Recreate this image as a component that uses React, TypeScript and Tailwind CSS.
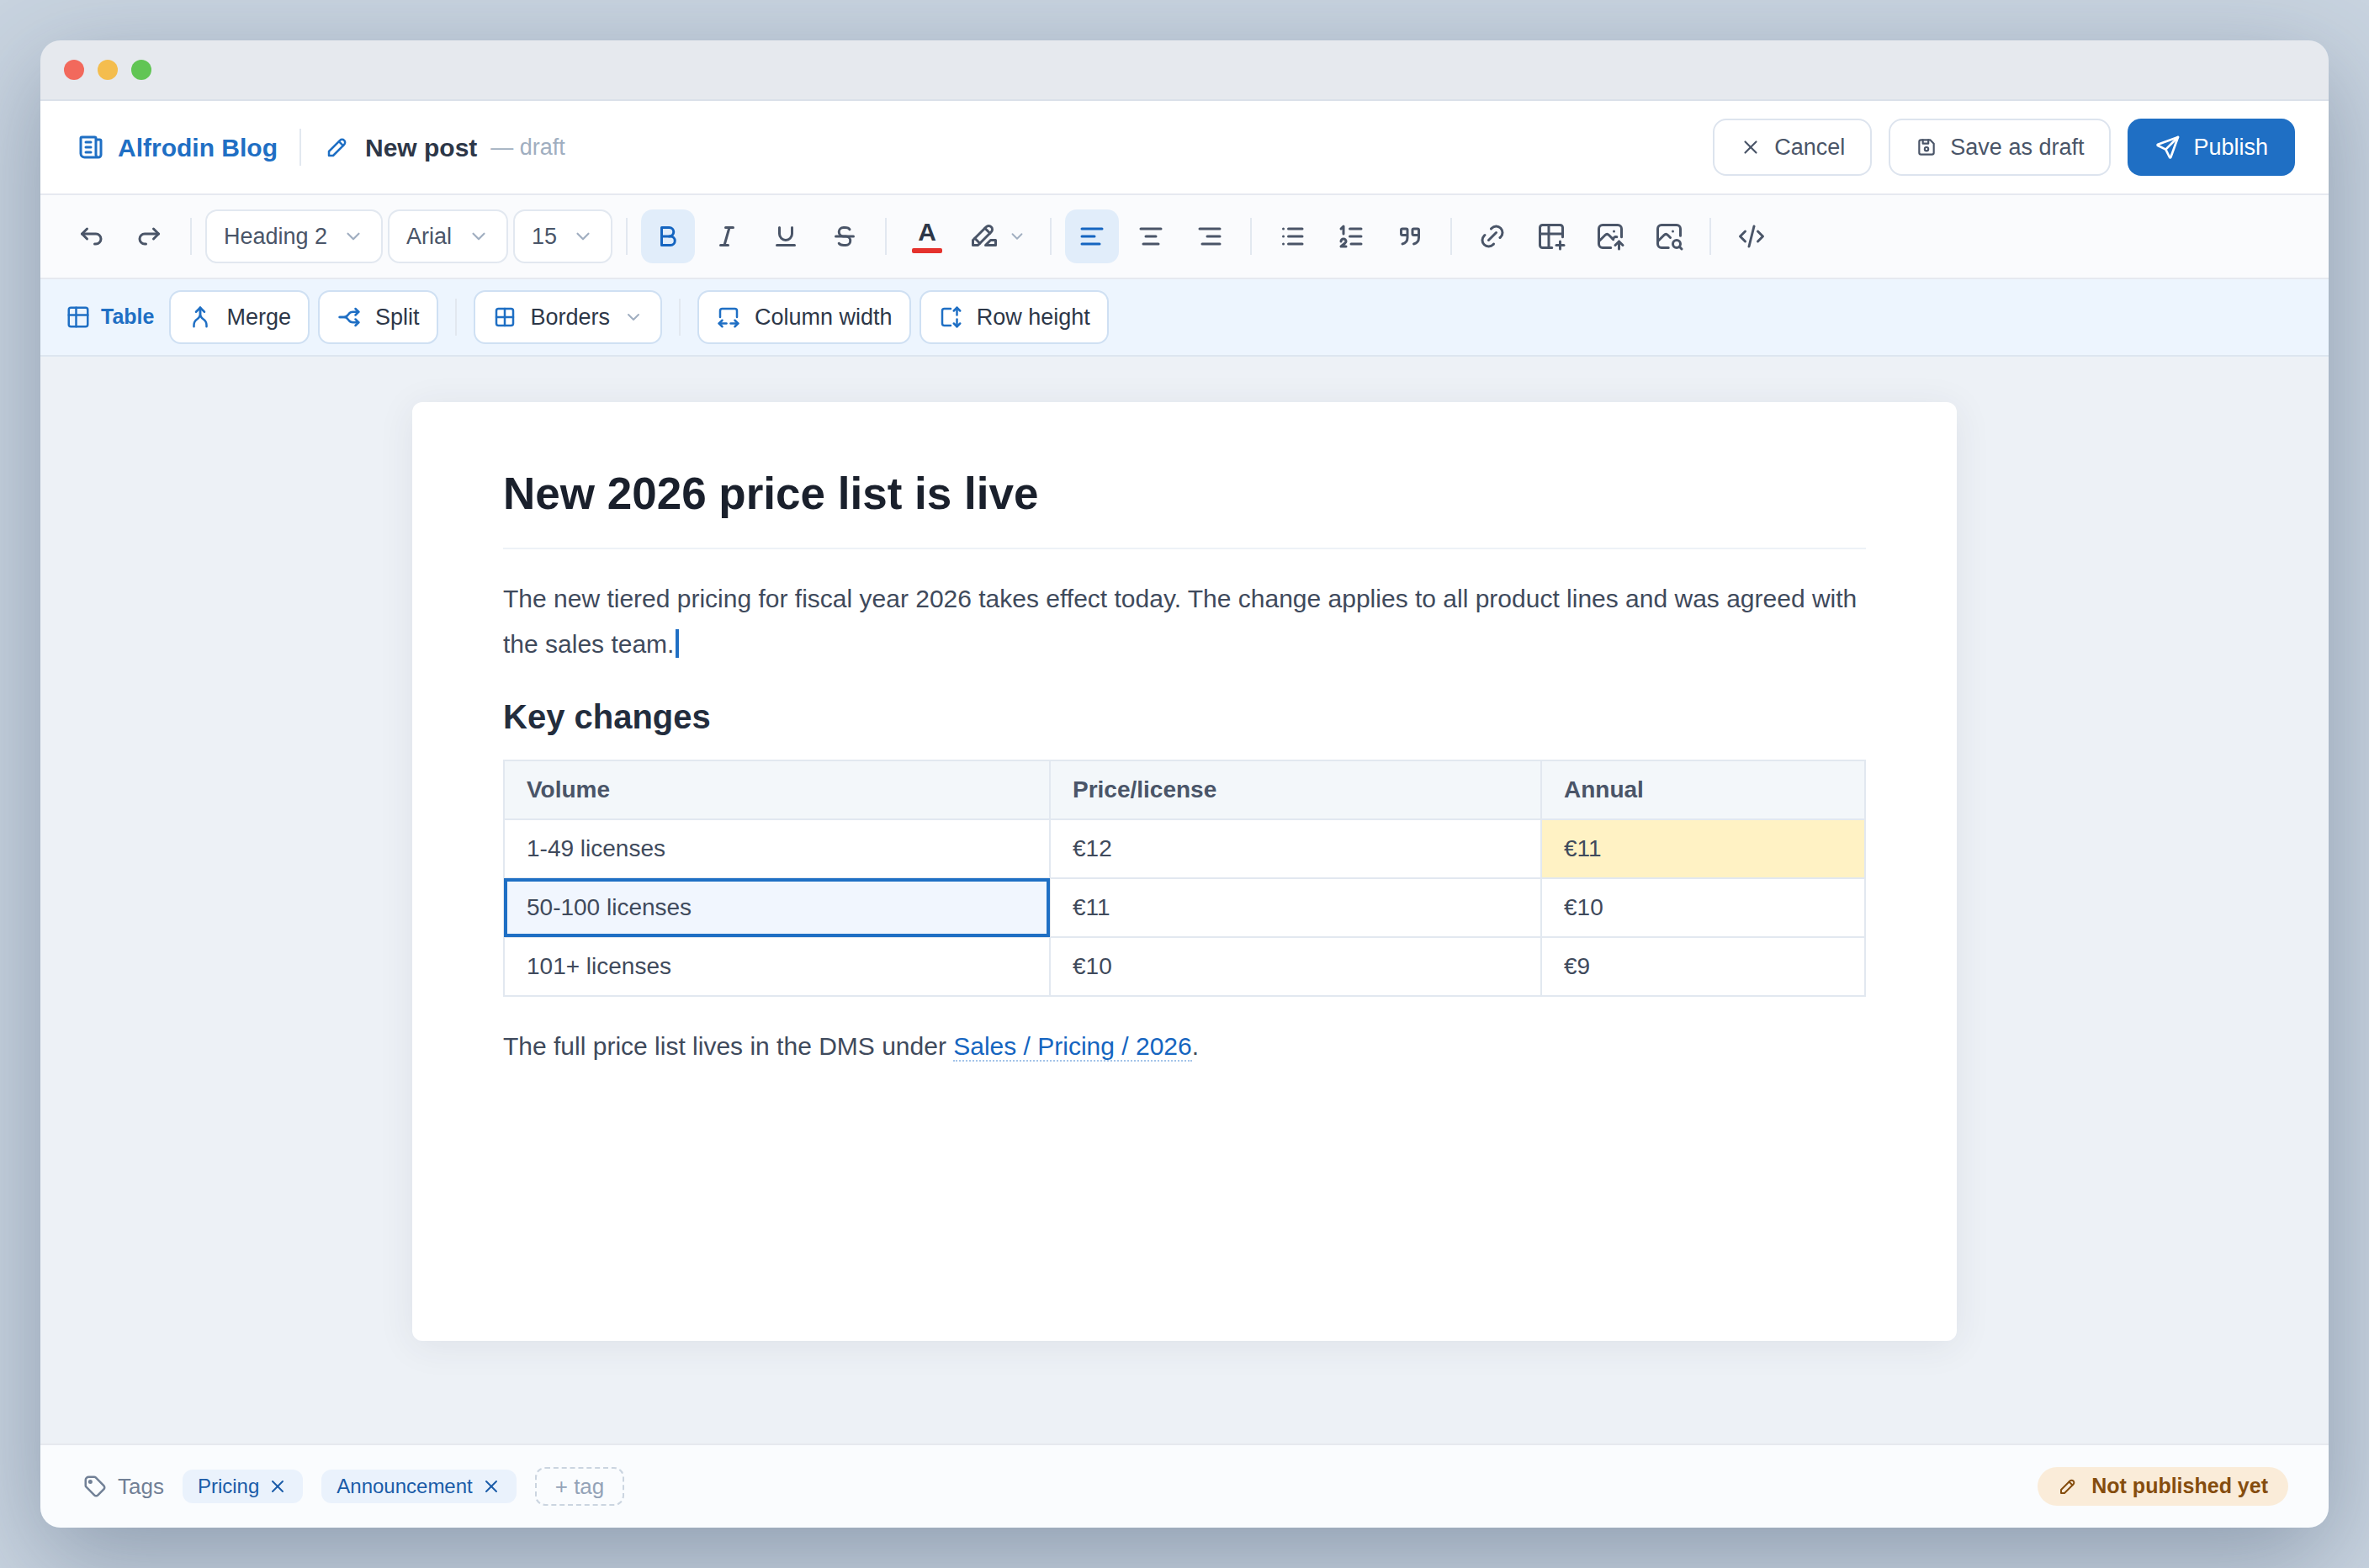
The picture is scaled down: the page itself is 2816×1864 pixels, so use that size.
import type { ReactNode } from "react";
import type { IconType } from "react-icons";
import {
  TbAlignCenter,
  TbAlignLeft,
  TbAlignRight,
  TbArrowAutofitHeight,
  TbArrowAutofitWidth,
  TbArrowBackUp,
  TbArrowForwardUp,
  TbArrowMerge,
  TbArrowsSplit2,
  TbBold,
  TbBorderAll,
  TbChevronDown,
  TbCode,
  TbDeviceFloppy,
  TbHighlight,
  TbItalic,
  TbLink,
  TbList,
  TbListNumbers,
  TbNews,
  TbPencil,
  TbPhotoSearch,
  TbPhotoUp,
  TbQuote,
  TbSend,
  TbStrikethrough,
  TbTable,
  TbTablePlus,
  TbTag,
  TbUnderline,
  TbX,
} from "react-icons/tb";

const rows = [
  { volume: "1-49 licenses", price: "€12", annual: "€11" },
  { volume: "50-100 licenses", price: "€11", annual: "€10" },
  { volume: "101+ licenses", price: "€10", annual: "€9" },
];

const tags = ["Pricing", "Announcement"];

function Divider() {
  return <span className="mx-[10px] h-11 w-0.5 shrink-0 bg-[#e2e8f0]" />;
}

type ToolProps = {
  icon: IconType;
  label: string;
  active?: boolean;
};

function Tool({ icon: Icon, label, active }: ToolProps) {
  return (
    <button
      type="button"
      aria-label={label}
      aria-pressed={active}
      className={`flex size-16 shrink-0 items-center justify-center rounded-[14px] ${
        active ? "bg-[#e1edfa] text-[#1565c0]" : "text-[#4a5568]"
      }`}
    >
      <Icon className="size-9" />
    </button>
  );
}

type PickerProps = {
  label: string;
  options: string[];
  width: string;
};

function Picker({ label, options, width }: PickerProps) {
  return (
    <div className={`relative shrink-0 ${width}`}>
      <select
        aria-label={label}
        className="h-16 w-full appearance-none rounded-[14px] border-2 border-[#e2e8f0] bg-white pr-12 pl-5 text-[27px] text-[#4a5568]"
      >
        {options.map((option) => (
          <option key={option}>{option}</option>
        ))}
      </select>
      <TbChevronDown className="pointer-events-none absolute top-[19px] right-[22px] size-[26px] text-[#a0aec0]" />
    </div>
  );
}

function TableButton({
  icon: Icon,
  children,
  menu,
}: {
  icon: IconType;
  children: ReactNode;
  menu?: boolean;
}) {
  return (
    <button
      type="button"
      className="flex h-16 shrink-0 items-center gap-4 rounded-[14px] border-2 border-[#cfe0f3] bg-white px-5 text-[27px] text-[#2d3748]"
    >
      <Icon className="size-[30px] text-[#1f6fc4]" />
      {children}
      {menu && <TbChevronDown className="size-6 text-[#a0aec0]" />}
    </button>
  );
}

function Header() {
  return (
    <header className="flex h-28 shrink-0 items-center justify-between border-b-2 border-[#e6e9f0] bg-white px-10">
      <div className="flex items-center">
        <div className="flex items-center gap-[14px] pl-0.5 text-[30px] font-bold text-[#1f6fc4]">
          <TbNews className="size-9" />
          Alfrodin Blog
        </div>
        <span className="mr-7 ml-[26px] h-11 w-0.5 bg-[#e2e8f0]" />
        <TbPencil className="mr-[18px] size-[30px] text-[#1f6fc4]" />
        <h2 className="text-[30px] font-bold text-[#2d3748]">New post</h2>
        <span className="ml-4 text-[27px] text-[#a0aec0]">— draft</span>
      </div>

      <div className="flex items-center gap-5 text-[27px]">
        <button
          type="button"
          className="flex h-[68px] items-center gap-[15px] rounded-2xl border-2 border-[#dde4ee] bg-white px-[30px] text-[#4a5568]"
        >
          <TbX className="size-[26px]" />
          Cancel
        </button>
        <button
          type="button"
          className="flex h-[68px] items-center gap-[15px] rounded-2xl border-2 border-[#dde4ee] bg-white px-[30px] text-[#4a5568]"
        >
          <TbDeviceFloppy className="size-[26px]" />
          Save as draft
        </button>
        <button
          type="button"
          className="flex h-[68px] items-center gap-[14px] rounded-2xl bg-[#1f6fc4] px-8 text-white"
        >
          <TbSend className="size-8" />
          Publish
        </button>
      </div>
    </header>
  );
}

function Toolbar() {
  return (
    <div className="flex h-[100px] shrink-0 items-center gap-[6px] border-b-2 border-[#e6e9f0] bg-[#fafbfd] px-7">
      <Tool icon={TbArrowBackUp} label="Undo" />
      <Tool icon={TbArrowForwardUp} label="Redo" />
      <Divider />
      <Picker
        label="Text style"
        options={["Heading 2", "Heading 1", "Text"]}
        width="w-[211px]"
      />
      <Picker label="Font" options={["Arial", "Roboto"]} width="w-[143px]" />
      <Picker label="Font size" options={["15", "12", "18"]} width="w-[118px]" />
      <Divider />
      <Tool icon={TbBold} label="Bold" active />
      <Tool icon={TbItalic} label="Italic" />
      <Tool icon={TbUnderline} label="Underline" />
      <Tool icon={TbStrikethrough} label="Strikethrough" />
      <Divider />
      <button
        type="button"
        aria-label="Text color"
        className="flex size-16 shrink-0 flex-col items-center justify-center gap-1"
      >
        <span className="text-[30px] leading-[30px] font-bold text-[#2d3748]">
          A
        </span>
        <span className="h-[6px] w-9 rounded-xs bg-[#e5322d]" />
      </button>
      <button
        type="button"
        aria-label="Highlight"
        className="flex h-16 shrink-0 items-center gap-[10px] px-3 text-[#4a5568]"
      >
        <TbHighlight className="size-9" />
        <TbChevronDown className="size-[22px] text-[#a0aec0]" />
      </button>
      <Divider />
      <Tool icon={TbAlignLeft} label="Align left" active />
      <Tool icon={TbAlignCenter} label="Align center" />
      <Tool icon={TbAlignRight} label="Align right" />
      <Divider />
      <Tool icon={TbList} label="Bulleted list" />
      <Tool icon={TbListNumbers} label="Numbered list" />
      <Tool icon={TbQuote} label="Quote" />
      <Divider />
      <Tool icon={TbLink} label="Link" />
      <Tool icon={TbTablePlus} label="Insert table" />
      <Tool icon={TbPhotoUp} label="Upload image" />
      <Tool icon={TbPhotoSearch} label="Browse images" />
      <Divider />
      <Tool icon={TbCode} label="Source code" />
    </div>
  );
}

function TableBar() {
  return (
    <div className="flex h-[92px] shrink-0 items-center gap-[10px] border-b-2 border-[#dde6f0] bg-[#edf5fe] px-7">
      <div className="mr-2 flex items-center gap-3 pl-0.5 text-[25px] font-bold text-[#1f6fc4]">
        <TbTable className="size-[30px]" />
        Table
      </div>
      <TableButton icon={TbArrowMerge}>Merge</TableButton>
      <TableButton icon={TbArrowsSplit2}>Split</TableButton>
      <Divider />
      <TableButton icon={TbBorderAll} menu>
        Borders
      </TableButton>
      <Divider />
      <TableButton icon={TbArrowAutofitWidth}>Column width</TableButton>
      <TableButton icon={TbArrowAutofitHeight}>Row height</TableButton>
    </div>
  );
}

function Article() {
  return (
    <article className="mx-auto min-h-[1116px] w-full max-w-[1836px] rounded-xl bg-white px-[108px] pt-[74px] pb-16 shadow-[0_6px_44px_rgba(45,55,72,0.08)]">
      <h1 className="border-b-2 border-[#edf2f7] pb-[29px] text-[53px] leading-[70px] font-bold text-[#1a202c]">
        New 2026 price list is live
      </h1>

      <p className="mt-8 text-[30px] leading-[54px] text-[#3f4a5c]">
        The new tiered pricing for fiscal year 2026 takes effect today. The
        change applies to all product lines and was agreed with the sales team.
        <span className="ml-0.5 inline-block h-[34px] w-1 bg-[#1f6fc4] align-[-6px]" />
      </p>

      <h2 className="mt-[34px] text-[40px] leading-[50px] font-bold text-[#232d3d]">
        Key changes
      </h2>

      <table className="mt-[26px] w-full table-fixed border-collapse text-left text-[28px] leading-[36px] text-[#3f4a5c]">
        <thead>
          <tr className="bg-[#f3f7fa] text-[#4a5568]">
            <th className="w-[649px] border-2 border-[#e2e8f0] px-[26px] py-4 font-bold">
              Volume
            </th>
            <th className="w-[584px] border-2 border-[#e2e8f0] px-[26px] py-4 font-bold">
              Price/license
            </th>
            <th className="border-2 border-[#e2e8f0] px-[26px] py-4 font-bold">
              Annual
            </th>
          </tr>
        </thead>
        <tbody>
          {rows.map((row, i) => (
            <tr key={row.volume}>
              <td
                className={`border-2 border-[#e2e8f0] px-[26px] py-4 ${
                  i === 1
                    ? "bg-[#f1f6fe] outline-4 -outline-offset-4 outline-[#1f6fc4]"
                    : ""
                }`}
              >
                {row.volume}
              </td>
              <td className="border-2 border-[#e2e8f0] px-[26px] py-4">
                {row.price}
              </td>
              <td
                className={`border-2 border-[#e2e8f0] px-[26px] py-4 ${
                  i === 0 ? "bg-[#fff2c4]" : ""
                }`}
              >
                {row.annual}
              </td>
            </tr>
          ))}
        </tbody>
      </table>

      <p className="mt-8 text-[30px] leading-[54px] text-[#3f4a5c]">
        The full price list lives in the DMS under{" "}
        <a
          href="#"
          className="border-b-2 border-dotted border-[#a3c4e9] text-[#1565c0]"
        >
          Sales / Pricing / 2026
        </a>
        .
      </p>
    </article>
  );
}

function Footer() {
  return (
    <footer className="flex h-[100px] shrink-0 items-center justify-between border-t-2 border-[#e6e9ee] bg-[#fafcfe] px-12">
      <div className="flex items-center gap-[22px]">
        <div className="flex items-center gap-3 pl-0.5 text-[26px] text-[#718096]">
          <TbTag className="size-[30px]" />
          Tags
        </div>
        {tags.map((tag) => (
          <span
            key={tag}
            className="flex h-10 items-center gap-[10px] rounded-xl bg-[#eaf2fc] px-[18px] text-2xl text-[#1a5ca8]"
          >
            {tag}
            <button type="button" aria-label={`Remove ${tag}`}>
              <TbX className="size-6" />
            </button>
          </span>
        ))}
        <button
          type="button"
          className="h-[46px] rounded-xl border-2 border-dashed border-[#cbd5e0] px-[22px] text-[26px] leading-[42px] text-[#94a3b8]"
        >
          + tag
        </button>
      </div>

      <div className="flex h-[46px] items-center gap-4 rounded-full bg-[#faecd9] px-6 text-[25px] font-bold text-[#854d0e]">
        <TbPencil className="size-6" />
        Not published yet
      </div>
    </footer>
  );
}

export default function App() {
  return (
    <div className="flex min-h-screen flex-col overflow-hidden bg-[#c9d4e0] p-12 font-['Liberation_Sans',Arial,sans-serif]">
      <div className="flex flex-1 flex-col overflow-hidden rounded-3xl shadow-[0_36px_120px_rgba(45,65,95,0.38)]">
        <div className="flex h-[72px] shrink-0 items-center gap-4 border-b-2 border-[#dae0e9] bg-[#e6e9ee] px-7">
          <span className="size-6 rounded-full bg-[#f2695c]" />
          <span className="size-6 rounded-full bg-[#f4bd4e]" />
          <span className="size-6 rounded-full bg-[#61c554]" />
        </div>
        <Header />
        <Toolbar />
        <TableBar />
        <main className="flex-1 bg-[#edf1f6] px-12 pt-[54px] pb-[122px]">
          <Article />
        </main>
        <Footer />
      </div>
    </div>
  );
}
